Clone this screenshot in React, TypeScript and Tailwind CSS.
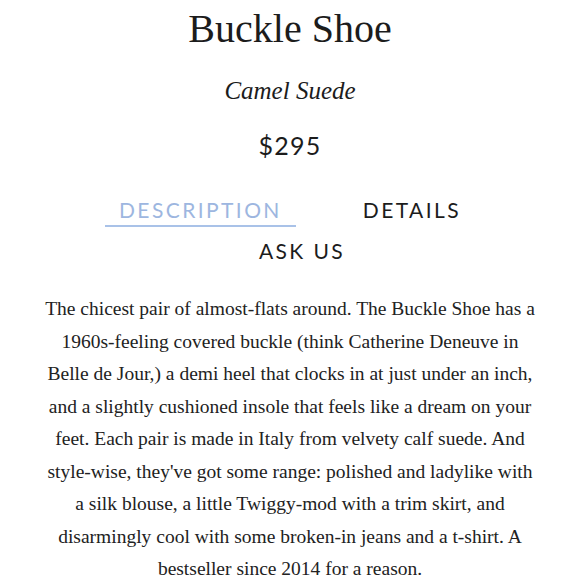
import { useState } from 'react';

const tabs = ['DESCRIPTION', 'DETAILS', 'ASK US'];

export default function App() {
  const [active, setActive] = useState('DESCRIPTION');

  return (
    <div className="w-[580px] h-[580px] overflow-hidden bg-white text-[#1c1c1c]">
      <h1 className="mt-[9px] text-center text-[40px] leading-none font-normal font-['Liberation_Serif',serif]">
        Buckle Shoe
      </h1>
      <p className="mt-[29px] text-center text-[25px] leading-none italic font-['Liberation_Serif',serif]">
        Camel Suede
      </p>
      <p className="mt-[30px] text-center text-[25px] leading-none tracking-[0.05em] font-['Lato',sans-serif]">
        $295
      </p>

      {/* tabs */}
      <div className="mt-[41px] w-[420px] mx-auto flex flex-wrap justify-center gap-x-[53px] gap-y-[13px] font-['Lato',sans-serif]">
        {tabs.map((t) => (
          <button
            key={t}
            onClick={() => setActive(t)}
            className={
              'px-[14px] pb-[5px] text-[21px] leading-none tracking-[0.115em] border-b-2 ' +
              (t === active
                ? 'text-[#9db6e0] border-[#a9c2e8]'
                : 'text-[#1c1c1c] border-transparent') +
              (t === 'ASK US' ? ' ml-[24px]' : '')
            }
          >
            {t}
          </button>
        ))}
      </div>

      <p className="mt-[25px] text-center whitespace-nowrap text-[19.5px] leading-[32.5px] text-[#222] font-['Liberation_Serif',serif]">
        The chicest pair of almost-flats around. The Buckle Shoe has a<br />
        1960s-feeling covered buckle (think Catherine Deneuve in<br />
        Belle de Jour,) a demi heel that clocks in at just under an inch,<br />
        and a slightly cushioned insole that feels like a dream on your<br />
        feet. Each pair is made in Italy from velvety calf suede. And<br />
        style-wise, they've got some range: polished and ladylike with<br />
        a silk blouse, a little Twiggy-mod with a trim skirt, and<br />
        disarmingly cool with some broken-in jeans and a t-shirt. A<br />
        bestseller since 2014 for a reason.
      </p>
    </div>
  );
}
